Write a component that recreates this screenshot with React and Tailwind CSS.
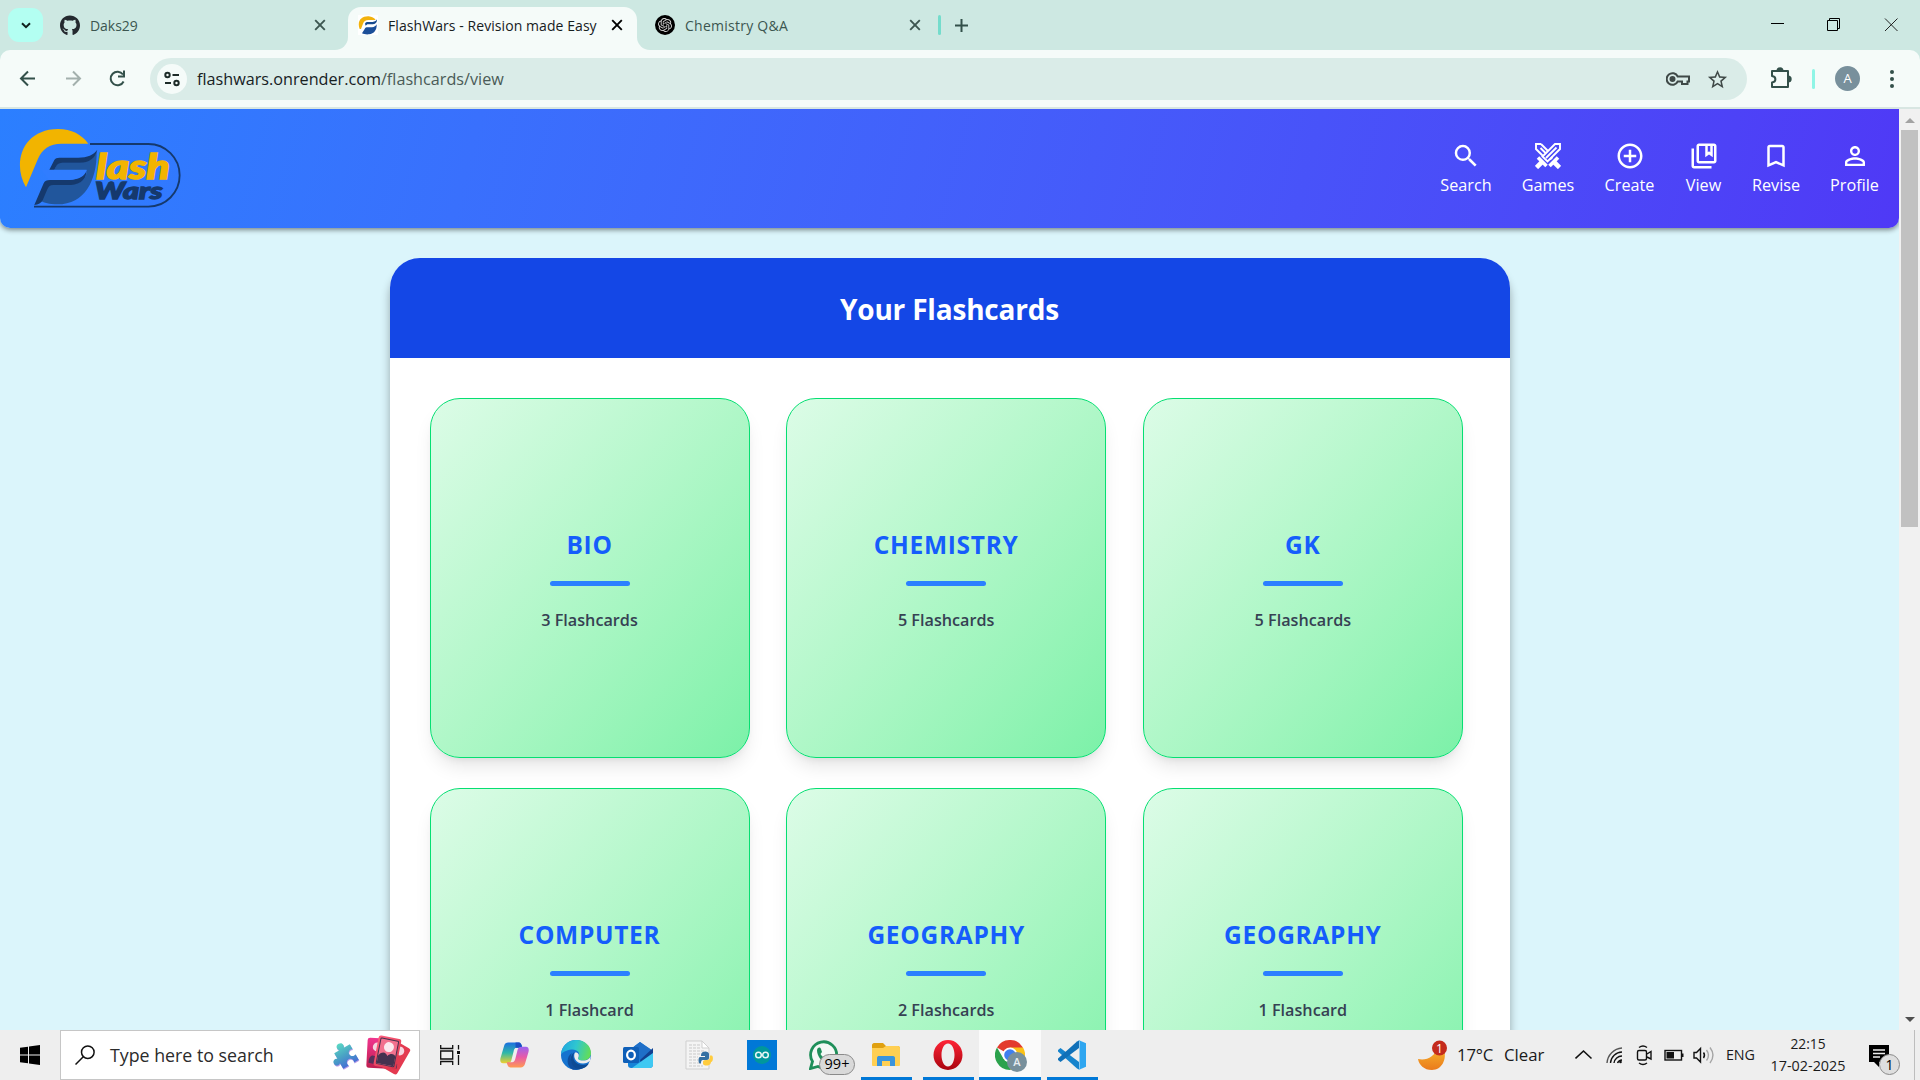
import { FaGithub } from "react-icons/fa";
import { SiOpenai } from "react-icons/si";
import {
  MdSearch,
  MdAddCircleOutline,
  MdOutlineCollectionsBookmark,
  MdBookmarkBorder,
  MdPersonOutline,
  MdStarOutline,
} from "react-icons/md";

const CloseX = ({ className }) => (
  <svg viewBox="0 0 12 12" className={`h-[12px] w-[12px] shrink-0 ${className}`} fill="none" stroke="currentColor" strokeWidth="1.9">
    <path d="M1.2 1.2 10.8 10.8M10.8 1.2 1.2 10.8" />
  </svg>
);

function Favicon() {
  return (
    <svg viewBox="0 0 60 60" className="h-5 w-5 shrink-0 bg-white">
      <path d="M5 42C-4 18 10 3 32 4C42 5 49 9 53 15H32C22 15 18 19 15 26L9 42Z" fill="#f2b20c" />
      <path d="M21 26C23 22 26 21 30 21H44C51 20 55 17 57 13C58 20 54 27 45 28H28L23 32Z" fill="#174a8e" />
      <path d="M12 55L20 42C22 38 25 37 29 37H42C49 36 53 33 56 28C57 45 48 57 33 58C24 59 17 57 12 55Z" fill="#1c4f99" />
    </svg>
  );
}

function TabStrip() {
  return (
    <div className="flex h-[50px] bg-[#f5fbf9] text-[14px]">
      <div className="flex w-[348px] items-start rounded-br-[13px] bg-[#cde8e2] pl-2 pt-2 text-[#3c5650]">
        <div className="flex h-[34px] w-[35px] items-center justify-center rounded-[11px] bg-[#b3fff2]">
          <svg viewBox="0 0 10 7" className="mt-px h-[7px] w-[10px]" fill="none" stroke="#10211d" strokeWidth="2">
            <path d="M1 1.2 5 5.2 9 1.2" />
          </svg>
        </div>
        <div className="flex h-[34px] flex-1 items-center">
          <FaGithub className="ml-[17px] h-[21px] w-[20px] text-[#24292f]" />
          <span className="ml-[10px] h-[18px] leading-[20px] tracking-[-0.05px]">Daks29</span>
          <CloseX className="ml-auto mr-[22px]" />
        </div>
      </div>
      <div className="w-[289px] bg-[#cde8e2] pt-[7px]">
        <div className="flex h-[43px] items-start rounded-t-[13px] bg-[#f5fbf9] pl-[10px] pt-[8px] text-[#16201e]">
          <Favicon />
          <span className="ml-[10px] w-[223px] shrink-0 whitespace-nowrap leading-[22px] tracking-[0.07px]">FlashWars - Revision made Easy</span>
          <CloseX className="mt-1 text-black" />
        </div>
      </div>
      <div className="flex flex-1 items-start rounded-bl-[13px] bg-[#cde8e2] pl-[18px] pt-[15px] text-[#3c5650]">
        <div className="flex h-5 w-5 items-center justify-center rounded-full bg-black">
          <SiOpenai className="h-[14px] w-[14px] text-[#d5d5d5]" />
        </div>
        <span className="ml-[10px] w-[224px] leading-[22px] tracking-[0.25px]">Chemistry Q&amp;A</span>
        <CloseX className="mt-1" />
        <div className="ml-[17px] h-5 w-[3px] rounded-full bg-[#74dccc]" />
        <svg viewBox="0 0 13 13" className="ml-[14px] mt-[4px] h-[13px] w-[13px]" stroke="#33504a" strokeWidth="2">
          <path d="M6.5 0V13M0 6.5H13" />
        </svg>
        <svg viewBox="0 0 128 14" className="ml-auto mr-[22px] mt-[3px] h-[14px] w-[128px]" fill="none" stroke="#000" strokeWidth="1">
          <path d="M1 5.5H14" />
          <path d="M57.500 2.500H67.500V12.500H57.500ZM59.500 2.500V.5H69.500V10.500H67.500" />
          <path d="M115 .5 127.500 13M127.500 .5 115 13" stroke="#222" />
        </svg>
      </div>
    </div>
  );
}

function Toolbar() {
  return (
    <div className="bg-[#cde8e2]">
      <div className="flex h-[59px] items-start rounded-t-[10px] border-b-2 border-[#d8e6e2] bg-[#f5fbf9] pt-2">
        <svg viewBox="0 0 150 42" className="h-[42px] w-[150px] shrink-0" fill="none" strokeWidth="2">
          <path d="M35 20.500H21.500M28 13.500 21 20.500 28 27.500" stroke="#33504a" />
          <path d="M66 20.500H79.500M73 13.500 80 20.500 73 27.500" stroke="#a3b0ad" />
          <path d="M123 16.500A6.800 6.800 0 1 0 123.600 23.500M124 12.500V18.500H118" stroke="#33504a" />
        </svg>
        <div className="flex h-[42px] w-[1597px] items-center rounded-full bg-[#daece8] pl-[7px] pr-[18px]">
          <div className="flex h-[30px] w-[30px] items-center justify-center rounded-full bg-[#f5fbf9]">
            <svg viewBox="0 0 16 16" className="mr-px h-4 w-4" fill="none" stroke="#1d2b28" strokeWidth="2">
              <circle cx="3.500" cy="4" r="2.200" />
              <path d="M8.500 4H15M1 12H7" />
              <circle cx="12.500" cy="12" r="2.200" />
            </svg>
          </div>
          <span className="ml-[10px] text-[16.200px] leading-[24px] text-[#17211f]">
            flashwars.onrender.com<span className="text-[#4a5b57]">/flashcards/view</span>
          </span>
          <svg viewBox="0 0 24 14" className="ml-auto h-[14px] w-[24px]" fill="none" stroke="#3f4947" strokeWidth="2">
            <path d="M11.700 4.500A5.800 5.800 0 1 0 11.700 9.500H16V12H21.500V9.500H23V4.500Z" />
            <circle cx="6.500" cy="7" r="2" fill="#3f4947" />
          </svg>
          <MdStarOutline className="ml-[16px] h-[23px] w-[23px] text-[#3f4947]" />
        </div>
        <svg viewBox="0 0 22 22" className="ml-[23px] mt-[9px] h-[22px] w-[22px]" fill="none" stroke="#33504a" strokeWidth="2">
          <path d="M2 4H18V20H2V15.500C6.500 15 6.500 9.500 2 9Z" strokeLinejoin="round" />
          <path d="M7.500 4A2.500 2.700 0 0 1 12.500 4ZM18 9.500A2.700 2.500 0 0 1 18 14.500Z" fill="#33504a" />
        </svg>
        <div className="ml-[20px] mt-[11px] h-5 w-[3px] rounded-full bg-[#8ff5e6]" />
        <div className="ml-[20px] mt-2 flex h-[25px] w-[25px] items-center justify-center rounded-full bg-[#78909c] text-[13px] text-white">A</div>
        <svg viewBox="0 0 4 18" className="ml-[30px] mt-[12px] h-[18px] w-[4px]" fill="#33504a">
          <circle cx="2" cy="2" r="2" />
          <circle cx="2" cy="9" r="2" />
          <circle cx="2" cy="16" r="2" />
        </svg>
      </div>
    </div>
  );
}

function Logo() {
  return (
    <svg viewBox="45 75 510 260" className="ml-[15px] mt-[16px] h-[86.700px] w-[170px]">
      <path d="M78 262C36 190 66 88 174 87C215 87 244 103 265 131H185C148 131 126 148 114 176Z" fill="#f2b400" />
      <path d="M270 132H445A94 94 0 0 1 445 320H102" fill="none" stroke="#15396d" strokeWidth="5.500" />
      <path d="M163 209L170 195C174 189 180 187 188 187H240C268 186 284 170 290 155C291 240 255 313 172 313C148 313 132 308 122 303L140 262C144 255 150 252 158 252H214C245 250 261 235 260 209Z" fill="#21569c" />
      <path d="M148 209L163 180C166 175 171 173 178 173H235C262 173 281 165 292 149C286 175 266 188 240 188H188C180 188 173 190 169 198L163 209Z" fill="#15396d" />
      <path d="M103 315L131 250C134 243 140 240 150 240H205C236 238 254 227 259 210C261 236 243 253 213 255H160C150 255 146 259 142 268L128 301C124 309 115 315 103 315Z" fill="#15396d" />
      <path d="M125 210H260C255 228 238 238 208 240H146Z" fill="#307dff" />
      <g fontFamily="Lato, sans-serif" fontWeight="900" fontStyle="italic">
        <text x="289" y="236" fontSize="101" textLength="220" lengthAdjust="spacingAndGlyphs" fill="#f2b400" stroke="#f2b400" strokeWidth="4.500">lash</text>
        <text x="285" y="297" fontSize="67" textLength="202" lengthAdjust="spacingAndGlyphs" fill="#15396d" stroke="#15396d" strokeWidth="4">Wars</text>
      </g>
    </svg>
  );
}

const Swords = ({ className }) => (
  <svg viewBox="0 0 26 26" className={className} fill="none" stroke="currentColor" strokeWidth="1.900">
    <path d="M11 10.500 5.500 5 M6 1H1V6L8.500 13.500M6 1 13 8" />
    <path d="M20 1H25V6L12.500 18.500 7.500 13.500ZM21.500 4.500 11 15" />
    <path d="M15 16.500 17.500 14" />
    <path d="M3 14.500 11.500 23" strokeWidth="3.600" />
    <path d="M23 14.500 14.500 23" strokeWidth="3.600" />
    <path d="M1.500 24.500 7 19M24.500 24.500 19 19" strokeWidth="4.600" />
  </svg>
);

const NAV = [
  { label: "Search", Icon: MdSearch, width: "w-[52px]" },
  { label: "Games", Icon: Swords, width: "w-[52px]", small: true },
  { label: "Create", Icon: MdAddCircleOutline, width: "w-[51px]" },
  { label: "View", Icon: MdOutlineCollectionsBookmark, width: "w-[37px]" },
  { label: "Revise", Icon: MdBookmarkBorder, width: "w-[48px]" },
  { label: "Profile", Icon: MdPersonOutline, width: "w-[49px]" },
];

function Header() {
  return (
    <header className="flex h-[119px] justify-between rounded-b-[10px] bg-[linear-gradient(105deg_in_oklab,#2b7fff,#4f39f6)] pr-5 shadow-[0_2px_5px_rgba(0,0,0,0.45)]">
      <Logo />
      <nav className="flex gap-[30px] pt-[32px] text-white">
        {NAV.map(({ label, Icon, width, small }) => (
          <div key={label} className={`flex flex-col items-center ${width}`}>
            <div className="flex h-[30px] items-center">
              <Icon className={small ? "h-[26px] w-[26px]" : "h-[30px] w-[30px]"} />
            </div>
            <span className="text-[16.200px] leading-[28px]">{label}</span>
          </div>
        ))}
      </nav>
    </header>
  );
}

const DECKS = [
  ["BIO", "3 Flashcards"],
  ["CHEMISTRY", "5 Flashcards"],
  ["GK", "5 Flashcards"],
  ["COMPUTER", "1 Flashcard"],
  ["GEOGRAPHY", "2 Flashcards"],
  ["GEOGRAPHY", "1 Flashcard"],
];

function Page() {
  return (
    <div className="flex h-[921px] bg-[#dbf5fb]">
      <main className="h-full flex-1 overflow-hidden">
        <Header />
        <section className="mx-auto mt-[30px] w-[1120px] rounded-[30px] bg-white shadow-[0_10px_10px_rgba(0,0,0,0.32)]">
          <h1 className="h-[100px] rounded-t-[30px] bg-[#1447e6] text-center text-[28px] font-bold leading-[102px] tracking-[-0.2px] text-white">Your Flashcards</h1>
          <div className="grid grid-cols-3 gap-[30px] p-[40px]">
            {DECKS.map(([title, count], i) => (
              <div key={i} className="flex h-[360px] w-[320px] flex-col items-center rounded-[30px] border border-[#05df72] bg-linear-to-br from-[#dcfce7] to-[#7bf1a8] pt-[129px] shadow-[0_12px_19px_-4px_rgba(0,0,0,0.1),0_5px_8px_-5px_rgba(0,0,0,0.1)]">
                <h2 className="text-[24.500px] font-bold leading-[34px] tracking-[0.7px] text-[#155dfc]">{title}</h2>
                <div className="mt-[19px] h-[5px] w-[80px] rounded-full bg-[#2b7fff]" />
                <p className="mt-[20px] text-[16.200px] font-semibold leading-[28px] text-[#364153]">{count}</p>
              </div>
            ))}
          </div>
        </section>
      </main>
      <div className="flex w-[21px] flex-col items-center bg-[#f1f1f1] pt-[9px] pb-[8px]">
        <div className="h-0 w-0 border-x-[5px] border-b-[5px] border-x-transparent border-b-[#a3a3a3]" />
        <div className="mt-[7px] h-[397px] w-[17px] bg-[#c1c1c1]" />
        <div className="mt-auto h-0 w-0 border-x-[5px] border-t-[5px] border-x-transparent border-t-[#505050]" />
      </div>
    </div>
  );
}

const Grad = ({ id, a, b, c, v }) => (
  <linearGradient id={id} x1="0" y1="0" x2={v ? "0" : "1"} y2="1">
    <stop offset="0" stopColor={a} />
    {c && <stop offset="0.5" stopColor={c} />}
    <stop offset="1" stopColor={b} />
  </linearGradient>
);

const PUZZLE =
  "M-9 -9H-3C-5 -11 -4.500 -15 -.5 -15S4 -11 2 -9H9V-3.500C6 -5 3.500 -3 3.500 -.500S6 4 9 2.500V9H3.500C5 6 3 3.500 .5 3.500S-4 6 -2.500 9H-9V2.500C-11 4 -14.500 3.500 -14.500 0S-11 -4 -9 -2.500Z";

function SearchArt() {
  return (
    <svg viewBox="0 0 84 44" className="h-[44px] w-[84px]">
      <defs>
        <Grad id="pz" a="#5ad8c4" b="#4570d4" c="#4aa5c4" v />
        <Grad id="cd" a="#ff5f7e" b="#d8344a" />
        <Grad id="cl" a="#f0358f" b="#c01f50" v />
      </defs>
      <path d={PUZZLE} fill="#b79be8" transform="translate(17 24.500) rotate(-30)" />
      <path d={PUZZLE} fill="url(#pz)" transform="translate(16.500 23.500) rotate(-30)" />
      <g transform="rotate(3 45 20)">
        <rect x="37" y="5" width="24" height="30" rx="2.500" fill="url(#cl)" />
        <circle cx="47" cy="14" r="4.500" fill="#f5d5e0" />
        <path d="M39 30C39 20 47 20 50 32Z" fill="#56305a" />
      </g>
      <g transform="rotate(30 68 25)">
        <rect x="54" y="11" width="21" height="30" rx="2.500" fill="#e43a50" />
        <circle cx="66" cy="18" r="4.500" fill="#f5d5e0" />
        <path d="M58 37C59 25 70 25 72 35Z" fill="#4c3056" />
      </g>
      <g transform="rotate(11 58 19)">
        <rect x="46" y="4" width="23" height="31" rx="2.500" fill="url(#cd)" />
        <rect x="48.500" y="6.500" width="18" height="26" rx="1" fill="#f2718e" stroke="#45324f" />
        <circle cx="58" cy="14" r="5" fill="#fbe9ee" />
        <path d="M49 24C53 18 57 21 58 23C61 19 65 20 66 22V32H49Z" fill="#45324f" />
      </g>
    </svg>
  );
}

function Copilot() {
  return (
    <svg viewBox="0 0 28 26" className="h-[28px] w-[29px]">
      <defs>
        <Grad id="cpa" a="#1a6fe0" b="#f0d02c" c="#2fb8a8" v />
        <Grad id="cpb" a="#9a63f0" b="#ff9a52" c="#e85aa8" v />
      </defs>
      <path d="M8 1H18C20 1 21 3 21.500 6H16C14 6 13.500 8 13 10L11 18C10.500 20 9 21 7 21H3C0 21 0 18 .5 16L4 4C4.600 2 6 1 8 1Z" fill="url(#cpa)" />
      <path d="M15 1H18C20 1 21 3 21.500 6H15Z" fill="#1b4fc4" />
      <path d="M20 25H10C8 25 7 23 6.500 20H12C14 20 14.500 18 15 16L17 8C17.500 6 19 5 21 5H25C28 5 28 8 27.500 10L24 22C23.400 24 22 25 20 25Z" fill="url(#cpb)" />
    </svg>
  );
}

function Edge() {
  return (
    <svg viewBox="0 0 30 30" className="h-[30px] w-[30px]">
      <defs>
        <linearGradient id="edg" x1="0" y1="0.200" x2="1" y2="0.400">
          <stop offset="0" stopColor="#1fa5e0" />
          <stop offset="0.500" stopColor="#2fc6d0" />
          <stop offset="1" stopColor="#62dd5a" />
        </linearGradient>
      </defs>
      <circle cx="15" cy="15" r="15" fill="#1673cf" />
      <path d="M0 14C1 5 8 0 15 0C24 0 30 6 30 13C30 18 26 20.500 22 20.500C18 20.500 16 19 17.500 17C20 13 16 9 10.500 9.500C5 10 1 13 0 14Z" fill="url(#edg)" />
      <path d="M11 13C7 20 13 28 21 28C18.500 30 14 30 12 29.700C5 27 5 16 11 13Z" fill="#0f4f9f" />
      <path d="M13.500 12C10 18 14 25 22 25C25 25 27.500 23.500 28 23C24 31 14 30 11.500 25C8.500 19 10 14 13.500 12Z" fill="#0d4a93" />
      <path d="M14 12.500C11.500 17 15 23.500 22 23.500C25 23.500 27.500 22 29 21L30 13C30 19 26 20.500 22 20.500C18 20.500 16 19 17.500 17C18.500 14.500 17 12 14 12.500Z" fill="#ededed" />
    </svg>
  );
}

function Outlook() {
  return (
    <svg viewBox="0 0 30 27" className="h-[27px] w-[30px]">
      <path d="M5 9 17 0 30 9V23C30 25 28 26 27 26H8C6 26 5 25 5 23Z" fill="#1583d8" />
      <path d="M11 4.500 17 0 30 9 17 18 9 12Z" fill="#1f6fc8" />
      <path d="M17 18 30 6V13L18 22Z" fill="#123f8f" />
      <path d="M30 11V23C30 25 28 26 27 26H9Z" fill="#3fc8f2" />
      <rect y="5" width="16" height="16" rx="1.500" fill="#0f5fb8" />
      <ellipse cx="8" cy="13" rx="3.900" ry="4.300" fill="none" stroke="#fff" strokeWidth="2.200" />
    </svg>
  );
}

function PythonFile() {
  return (
    <svg viewBox="0 0 30 30" className="h-[30px] w-[30px]">
      <path d="M1 1H17L24 8V29H1Z" fill="#f4f4f4" stroke="#cfcfcf" />
      <path d="M17 1V8H24Z" fill="#fff" stroke="#cfcfcf" />
      <path d="M4 5H15M4 8H15M4 11H19M4 14H15M4 17H13M4 20H13M4 23H15M4 26H18" stroke="#c9c9c9" strokeDasharray="3 1" />
      <path d="M16 15C16 10.500 24 10.500 24 14V18C24 20 22 20 20 20H18C16 20 16 22 16 23.500H15C13 23.500 13 17 15 17H20V16H16Z" fill="#3470a3" />
      <path d="M26 22C26 26.500 18 26.500 18 23.500V21.500C18 20 20 20 22 20C25 20 25 18 25 15.500H26.500C28.500 15.500 28.500 22 26 22Z" fill="#ffcc3e" />
    </svg>
  );
}

function Arduino() {
  return (
    <svg viewBox="0 0 30 30" className="h-[30px] w-[30px]">
      <rect width="30" height="30" fill="#0078d7" />
      <circle cx="15" cy="15" r="9" fill="#00979c" />
      <g fill="none" stroke="#e8f6f6" strokeWidth="1.500">
        <circle cx="11.500" cy="15" r="2.800" />
        <circle cx="18.500" cy="15" r="2.800" />
      </g>
    </svg>
  );
}

function WhatsApp() {
  return (
    <div className="relative h-[30px] w-[30px]">
      <svg viewBox="0 0 30 30" className="h-[30px] w-[30px]">
        <path d="M1.500 28.500 3.500 21.500A13 13 0 1 1 9 26.500Z" fill="#f4f8f5" stroke="#1f8f5a" strokeWidth="2.800" />
        <path d="M8 10C9 7 11 7 12 9L13 12L11.500 14C13 16.500 15 18 17 19L19 17.500L23 19.500C23 22 20 23.500 18 23C12 21.500 8 16 8 10Z" fill="#1f8f5a" />
      </svg>
      <div className="absolute left-[10px] top-[14px] flex h-[21px] w-[36px] items-center justify-center rounded-full border border-[#8a8a8a] bg-[#d9d9d9] text-[14.500px] leading-none text-black">99+</div>
    </div>
  );
}

function Explorer() {
  return (
    <svg viewBox="0 0 28 24" className="h-[24px] w-[28px]">
      <path d="M0 2C0 1 1 0 2 0H11L14 3H26C27 3 28 4 28 5V8H0Z" fill="#e0a010" />
      <path d="M0 5H11L14 3H26C27 3 28 4 28 5V22C28 23 27 23 26 23H2C1 23 0 23 0 22Z" fill="#ffcf52" />
      <path d="M5 23V15C5 13.500 6 13 7 13H21C22.500 13 23 14 23 15V23H18V18H10V23Z" fill="#3a94dc" />
    </svg>
  );
}

function Opera() {
  return (
    <svg viewBox="0 0 30 30" className="h-[30px] w-[30px]">
      <defs>
        <Grad id="op" a="#ff2436" b="#a8040e" v />
      </defs>
      <path fillRule="evenodd" d="M15 0A14.500 15 0 1 1 15 30A14.500 15 0 1 1 15 0ZM15 3.500C11 3.500 8.500 9 8.500 15S11 26.500 15 26.500S21.500 21 21.500 15S19 3.500 15 3.500Z" fill="url(#op)" />
    </svg>
  );
}

function Chrome() {
  return (
    <div className="relative h-[30px] w-[30px]">
      <svg viewBox="0 0 30 30" className="h-[30px] w-[30px]">
        <path d="M15 15 2 7.500A15 15 0 0 1 28 7.500Z" fill="#e33b2e" />
        <path d="M15 15V7.500H28A15 15 0 0 1 15 30Z" fill="#fbc116" />
        <path d="M15 15 21.500 18.700 15 30A15 15 0 0 1 2 7.500L8.500 18.700Z" fill="#2ba24c" />
        <circle cx="15" cy="15" r="7.500" fill="#fff" />
        <circle cx="15" cy="15" r="5.800" fill="#3f7ff0" />
      </svg>
      <div className="absolute left-[12px] top-[12px] flex h-[20px] w-[20px] items-center justify-center rounded-full bg-[#78909c] text-[11px] font-semibold text-[#e8edf0]">A</div>
    </div>
  );
}

function VsCode() {
  return (
    <svg viewBox="0 0 30 30" className="h-[30px] w-[30px]">
      <path d="M1 10 3.500 8 22 22V29.500L20 28.500 1 11.500Z" fill="#1583cc" />
      <path d="M1 20 3.500 22 22 8V.5L20 1.500 1 18.500Z" fill="#0f70b8" />
      <path d="M21.500 0 29 3.300V26.700L21.500 30C22.500 29 22.500 28 22.500 27V3C22.500 2 22.500 1 21.500 0Z" fill="#2fa6f0" />
    </svg>
  );
}

const APPS = [
  { name: "copilot", Icon: Copilot },
  { name: "edge", Icon: Edge },
  { name: "outlook", Icon: Outlook },
  { name: "python", Icon: PythonFile },
  { name: "arduino", Icon: Arduino },
  { name: "whatsapp", Icon: WhatsApp },
  { name: "explorer", Icon: Explorer, open: true },
  { name: "opera", Icon: Opera, open: true },
  { name: "chrome", Icon: Chrome, open: true, active: true },
  { name: "vscode", Icon: VsCode, open: true },
];

function Taskbar() {
  return (
    <footer className="flex h-[50px] bg-[#eeeeee] text-[#1a1a1a]">
      <div className="flex w-[60px] items-center justify-center">
        <svg viewBox="0 0 20 20" className="h-5 w-5">
          <path d="M0 2.800 8 1.700V9.500H0ZM9 1.500 20 0V9.500H9ZM0 10.500H8V18.300L0 17.200ZM9 10.500H20V20L9 18.500Z" />
        </svg>
      </div>
      <div className="flex w-[360px] items-center border border-[#c6c6c6] bg-white">
        <svg viewBox="0 0 20 20" className="ml-[14px] h-5 w-5" fill="none" stroke="#111" strokeWidth="1.500">
          <circle cx="12.800" cy="7.200" r="6.300" />
          <path d="M8.500 11.500 .5 19.500" />
        </svg>
        <span className="ml-[15px] text-[17.800px] leading-[26px] text-[#2b2b2b]">Type here to search</span>
        <div className="ml-auto mr-[5px]">
          <SearchArt />
        </div>
      </div>
      <div className="flex w-[63px] items-center justify-center">
        <svg viewBox="0 0 20 20" className="ml-[-3px] h-5 w-5" fill="none" stroke="#111" strokeWidth="1.300">
          <path d="M.7 0V3.500H12.700V0M.7 20V16.500H12.700V20M.7 6H12.700V14H.7ZM18.500 0V4.500M18.500 10V20" />
          <path d="M17 6H20V9H17Z" fill="#111" stroke="none" />
        </svg>
      </div>
      {APPS.map(({ name, Icon, open, active }) => (
        <div key={name} className="flex w-[62px] flex-col items-center">
          <div className={`flex w-full flex-1 items-center justify-center ${active ? "bg-[#fafafa]" : ""} ${open ? "pt-[3px]" : ""}`}>
            <Icon />
          </div>
          {open && <div className={`h-[3px] bg-[#0078d7] ${active ? "w-full" : "w-[51px]"}`} />}
        </div>
      ))}
      <div className="ml-auto flex items-center">
        <svg viewBox="0 0 30 32" className="mb-[3px] mr-[9px] h-[32px] w-[30px] overflow-visible">
          <defs>
            <Grad id="mn" a="#f8b62c" b="#ea7a1c" v />
          </defs>
          <path d="M0 21C8 23 17 19 20 9L26 12C29 21 24 32 14 32C6 32 1 27 0 21Z" fill="url(#mn)" />
          <circle cx="21.500" cy="10" r="7.500" fill="#c42b1c" />
          <text x="21.500" y="14.500" fontSize="12" fill="#fff" textAnchor="middle">1</text>
        </svg>
        <span className="w-[47px] text-[16.800px] tracking-[-0.2px]">17°C</span>
        <span className="w-[71px] text-[16.800px]">Clear</span>
        <svg viewBox="0 0 142 24" className="h-[24px] w-[142px]" fill="none" stroke="#111" strokeWidth="1.400">
          <path d="M.5 15.500 8.500 8 16.500 15.500" strokeWidth="1.600" />
          <g>
            <path d="M32 20A16 16 0 0 1 47 5" stroke="#555" />
            <path d="M35.500 20A12 12 0 0 1 47 9M39 20A8 8 0 0 1 47 13M42.500 20A5 5 0 0 1 47 17" />
            <circle cx="45.500" cy="19" r="1.300" fill="#111" stroke="none" />
          </g>
          <g>
            <rect x="62.500" y="7.500" width="9" height="9.500" rx="1.500" />
            <path d="M72 11 76 8.500V16L72 14M64 4.500Q68 1.500 72 4.500M64 20Q68 23 72 20" />
          </g>
          <g>
            <rect x="90" y="7.500" width="16.500" height="9.500" />
            <path d="M91.500 9H99V15.500H91.500Z" fill="#111" stroke="none" />
            <path d="M107.500 10.500V14" strokeWidth="2" />
          </g>
          <g>
            <path d="M119 9.500H121.500L125.500 5.500V19L121.500 15H119Z" />
            <path d="M128.500 9.500Q130.500 12.300 128.500 15" />
            <path d="M131.500 7Q135.500 12.300 131.500 17.500M135 4.500Q141 12.300 135 20" stroke="#a5a5a5" />
          </g>
        </svg>
        <span className="ml-[9px] w-[44px] text-[14.300px] tracking-[-0.1px]">ENG</span>
        <div className="flex w-[76px] flex-col items-center text-[14.400px]">
          <span className="h-[23px] text-[13.800px] leading-[23px]">22:15</span>
          <span className="h-[23px] whitespace-nowrap leading-[22px]">17-02-2025</span>
        </div>
        <div className="relative ml-[23px] h-[50px] w-[46px] border-r border-[#bdbdbd]">
          <svg viewBox="0 0 20 22" className="mt-[15px] h-[22px] w-[20px]">
            <path d="M0 0H20V17H10V22L5 17H0Z" fill="#000" />
            <path d="M4 5H16M4 8.500H16M4 12H11" stroke="#eee" strokeWidth="1.300" />
          </svg>
          <div className="absolute left-[10px] top-[24px] flex h-[21px] w-[21px] items-center justify-center rounded-full border border-[#8a8a8a] bg-[#dedede] text-[14px] leading-none text-black">1</div>
        </div>
        <div className="w-[5px]" />
      </div>
    </footer>
  );
}

export default function App() {
  return (
    <div className="h-[1080px] w-[1920px] overflow-hidden font-['Open_Sans','Noto_Sans',sans-serif]">
      <TabStrip />
      <Toolbar />
      <Page />
      <Taskbar />
    </div>
  );
}
